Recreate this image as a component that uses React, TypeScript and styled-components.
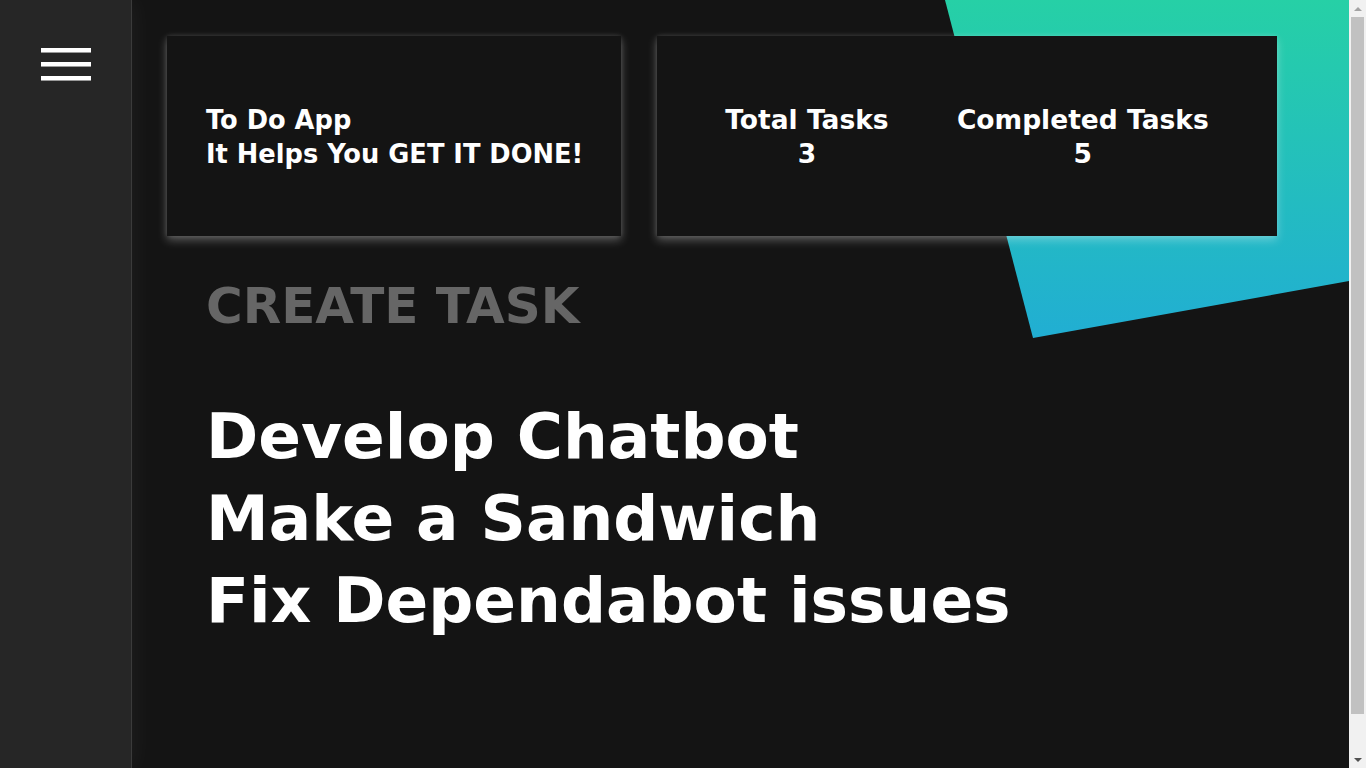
import React from "react";
import styled, { createGlobalStyle } from "styled-components";

const Global = createGlobalStyle`
  html, body { margin: 0; padding: 0; background: #141414; overflow: hidden; }
  body { font-family: "DejaVu Sans", "Open Sans", sans-serif; color: #fff; }
  * { box-sizing: border-box; }
`;

const Page = styled.div`
  display: flex;
  height: 100vh;
`;

const Layout = styled.div`
  flex: 1;
  display: flex;
  position: relative;
  overflow: hidden;
`;

const Sidebar = styled.aside`
  flex: 0 0 132px;
  background: #262626;
  border-right: 1px solid #3b3b3b;
  box-shadow: 2px 0 22px rgba(255, 255, 255, 0.05);
  padding: 48px 0 0 41px;
  position: relative;
  z-index: 2;
`;

const Burger = styled.button`
  display: flex;
  flex-direction: column;
  gap: 9px;
  padding: 0;
  border: 0;
  background: none;
  cursor: pointer;
`;

const BurgerLine = styled.span`
  display: block;
  width: 50px;
  height: 5px;
  background: #fff;
  border-bottom: 1px solid #9a9a9a;
`;

const Accent = styled.div`
  position: absolute;
  top: 0;
  right: 0;
  width: 404px;
  height: 338px;
  background: linear-gradient(180deg, #26d0a6 0%, #21aed3 100%);
  clip-path: polygon(0 0, 100% 0, 100% 281px, 88px 338px);
  z-index: 0;
`;

const Main = styled.main`
  flex: 1;
  padding: 36px 72px 0 35px;
  position: relative;
  z-index: 1;
`;

const CardRow = styled.div`
  display: grid;
  grid-template-columns: 454px 620px;
  gap: 36px;
`;

const Card = styled.section`
  height: 200px;
  padding-top: 2px;
  background: #141414;
  box-shadow: 0 4px 9px rgba(255, 255, 255, 0.3), 0 0 5px rgba(255, 255, 255, 0.12);
  display: flex;
  align-items: center;
`;

const IntroCard = styled(Card)`
  padding-left: 39px;
`;

const StatsCard = styled(Card)`
  justify-content: space-evenly;
`;

const BoldText = styled.div<{ $size?: number }>`
  font-weight: 700;
  font-size: ${(p) => p.$size ?? 25.7}px;
  line-height: 34px;
  white-space: nowrap;
`;

const Stat = styled(BoldText)`
  text-align: center;
`;

const Content = styled.div`
  padding-left: 39px;
`;

const CreateTitle = styled.h2`
  margin: 40px 0 0;
  font-size: 50px;
  line-height: 60px;
  font-weight: 700;
  color: #666;
`;

const TaskList = styled.ul`
  list-style: none;
  margin: 60px 0 0;
  padding: 0;
`;

const Task = styled.li`
  font-size: 63px;
  font-weight: 700;
  line-height: 82px;
  white-space: nowrap;
`;

const ScrollBar = styled.div`
  flex: 0 0 17px;
  background: #f1f1f1;
  display: flex;
  flex-direction: column;
  align-items: center;
`;

const ScrollArrow = styled.div<{ $down?: boolean }>`
  flex: 0 0 17px;
  display: flex;
  align-items: center;
  justify-content: center;
  &::before {
    content: "";
    border-left: 4px solid transparent;
    border-right: 4px solid transparent;
    ${(p) => (p.$down ? "border-top: 4px solid #505050;" : "border-bottom: 4px solid #a3a3a3;")}
  }
`;

const ScrollTrack = styled.div`
  flex: 1;
  width: 100%;
  padding: 0 2px;
`;

const ScrollThumb = styled.div`
  height: 95%;
  background: #c1c1c1;
`;

const tasks = ["Develop Chatbot", "Make a Sandwich", "Fix Dependabot issues"];

export default function App() {
  return (
    <>
      <Global />
      <Page>
        <Layout>
          <Sidebar>
            <Burger aria-label="menu">
              <BurgerLine />
              <BurgerLine />
              <BurgerLine />
            </Burger>
          </Sidebar>
          <Accent />
          <Main>
            <CardRow>
              <IntroCard>
                <BoldText>
                  To Do App
                  <br />
                  It Helps You GET IT DONE!
                </BoldText>
              </IntroCard>
              <StatsCard>
                <Stat $size={26.5}>
                  Total Tasks
                  <br />3
                </Stat>
                <Stat $size={26.5}>
                  Completed Tasks
                  <br />5
                </Stat>
              </StatsCard>
            </CardRow>
            <Content>
              <CreateTitle>CREATE TASK</CreateTitle>
              <TaskList>
                {tasks.map((t) => (
                  <Task key={t}>{t}</Task>
                ))}
              </TaskList>
            </Content>
          </Main>
        </Layout>
        <ScrollBar aria-hidden>
          <ScrollArrow />
          <ScrollTrack>
            <ScrollThumb />
          </ScrollTrack>
          <ScrollArrow $down />
        </ScrollBar>
      </Page>
    </>
  );
}
